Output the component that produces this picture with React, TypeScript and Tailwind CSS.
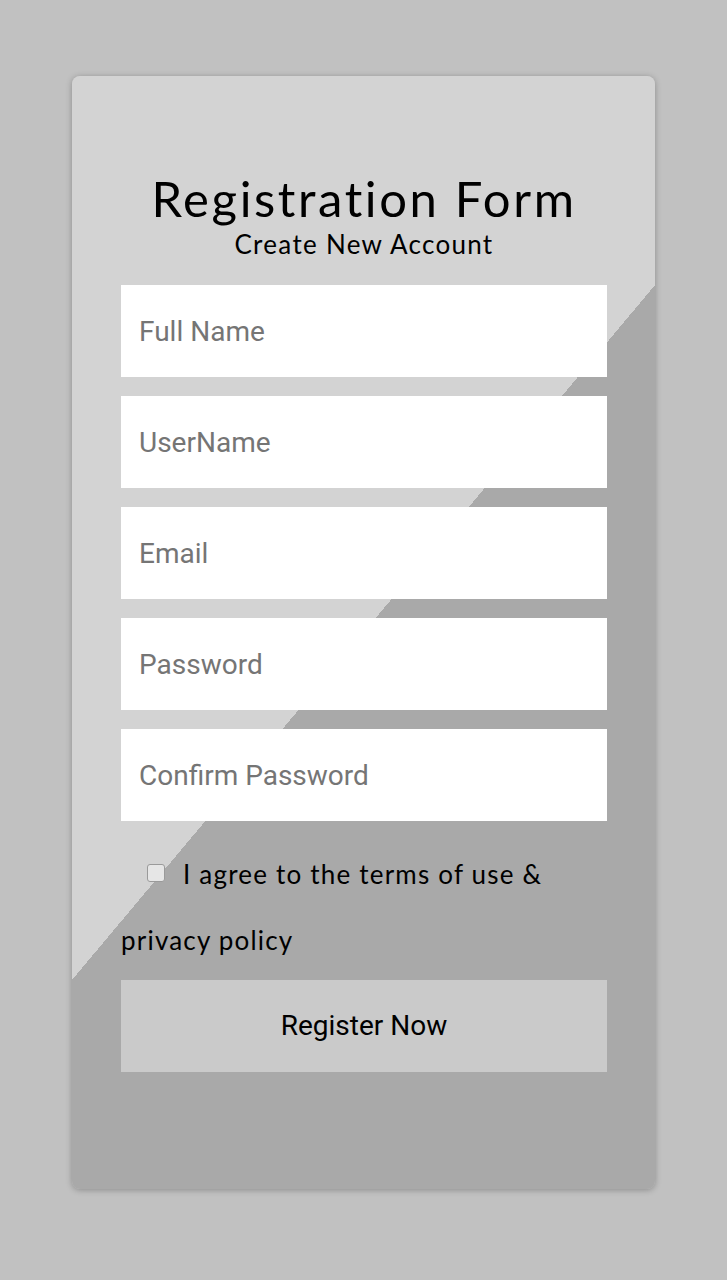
import { useState } from "react";

const fields = ["Full Name", "UserName", "Email", "Password", "Confirm Password"];

const App = () => {
  const [agree, setAgree] = useState(false);
  return (
    // page
    <div className="min-h-screen w-full bg-[#c1c1c1] pt-[76px] pb-[91px] flex justify-center">
      <div className="w-[583px] h-[1113px] rounded-lg shadow-[0_1px_6px_rgba(0,0,0,0.28)] bg-[linear-gradient(130deg,#d3d3d3_50%,#a9a9a9_50%)] pl-[49px] pr-[48px] pt-[94px] flex flex-col">
        <h1 className="text-center text-black text-[49px] leading-[56px] tracking-[2.6px] font-['Lato',sans-serif]">
          Registration Form
        </h1>
        <p className="mt-[3px] text-center text-black text-[26px] leading-[30px] tracking-[1.3px] font-['Lato',sans-serif] mb-[26px]">
          Create New Account
        </p>

        <div className="flex flex-col gap-[19px]">
          {fields.map((f) => (
            <input
              key={f}
              type={f.includes("Password") ? "password" : "text"}
              placeholder={f}
              className="h-[92px] w-full bg-white px-[18px] text-[28px] font-['Roboto',sans-serif] text-black placeholder:text-[#757575] outline-none"
            />
          ))}
        </div>

        <label className="mt-[20px] block text-[26px] leading-[66px] tracking-[1.2px] text-black font-['Lato',sans-serif]">
          <input
            type="checkbox"
            checked={agree}
            onChange={(e) => setAgree(e.target.checked)}
            className="ml-[26px] mr-[18px] h-[18px] w-[18px] align-[2px] appearance-none rounded-[3px] border border-[#9a9a9a] bg-[#e6e6e6]"
          />
          I agree to the terms of use &amp; privacy policy
        </label>

        <button className="mt-[7px] h-[92px] w-full bg-[#cacaca] text-[28px] text-black font-['Roboto',sans-serif]">
          Register Now
        </button>
      </div>
    </div>
  );
};

export default App;
